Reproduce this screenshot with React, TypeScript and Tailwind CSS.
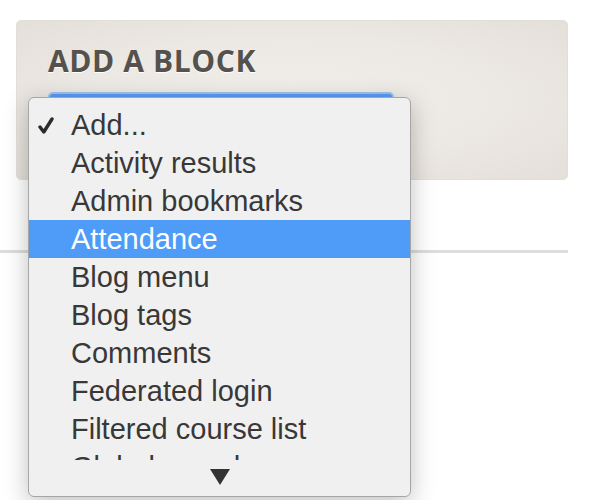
import { useState } from "react";

const items = [
  "Add...",
  "Activity results",
  "Admin bookmarks",
  "Attendance",
  "Blog menu",
  "Blog tags",
  "Comments",
  "Federated login",
  "Filtered course list",
  "Global search",
];

function Check() {
  return (
    <svg width="16" height="17" viewBox="0 0 16 17" className="absolute left-[9px] top-[11px]">
      <path d="M2 10 L5.8 15 L14 2" fill="none" stroke="#2b2b2b" strokeWidth="3.4" strokeLinecap="round" strokeLinejoin="round" />
    </svg>
  );
}

export default function App() {
  const [selected] = useState("Add...");
  const [hovered, setHovered] = useState("Attendance");

  return (
    <div className="relative w-[594px] h-[500px] bg-white overflow-hidden font-['Liberation_Sans',Arial,sans-serif]">
      <div className="pt-[20px] pl-[16px]">
        <div className="w-[552px] h-[160px] rounded-[5px] border border-[#e2ded8] bg-[radial-gradient(ellipse_at_center,#f1eeea_0%,#ece8e3_55%,#e4dfd9_100%)] pt-[23px] pl-[31px]">
          <h2 className="font-['Open_Sans',sans-serif] font-bold text-[30px] leading-[34px] tracking-[0.6px] text-[#55514c] [text-shadow:0_1px_0_#ffffff]">
            ADD A BLOCK
          </h2>
          <div className="mt-[14px] w-[346px] h-[32px] rounded-[5px] bg-[#5b9cf2] border-2 border-[#9cc2f2]" />
        </div>
      </div>
      <div className="mt-[70px] w-[568px] h-[3px] bg-[#dddddd]" />

      <div className="absolute left-[28px] top-[97px] w-[383px] h-[400px] rounded-[6px] border border-[#a6a6a6] bg-[#f0f0f0] shadow-[0_6px_24px_rgba(0,0,0,0.25)] overflow-hidden">
        <div className="h-[362px] pt-[8px] overflow-hidden">
          {items.map((it) => {
            const active = it === hovered;
            return (
              <div
                key={it}
                onMouseEnter={() => setHovered(it)}
                className={
                  "relative h-[38px] pl-[42px] text-[29px] leading-[38px] whitespace-nowrap " +
                  (active ? "bg-[#4f9bf8] text-white" : "text-[#383838]")
                }
              >
                {it === selected && <Check />}
                {it}
              </div>
            );
          })}
        </div>
        <div className="flex justify-center pt-[9px]">
          <svg width="20" height="16" viewBox="0 0 20 16">
            <path d="M0 0 H20 L10 16 Z" fill="#333333" />
          </svg>
        </div>
      </div>
    </div>
  );
}
